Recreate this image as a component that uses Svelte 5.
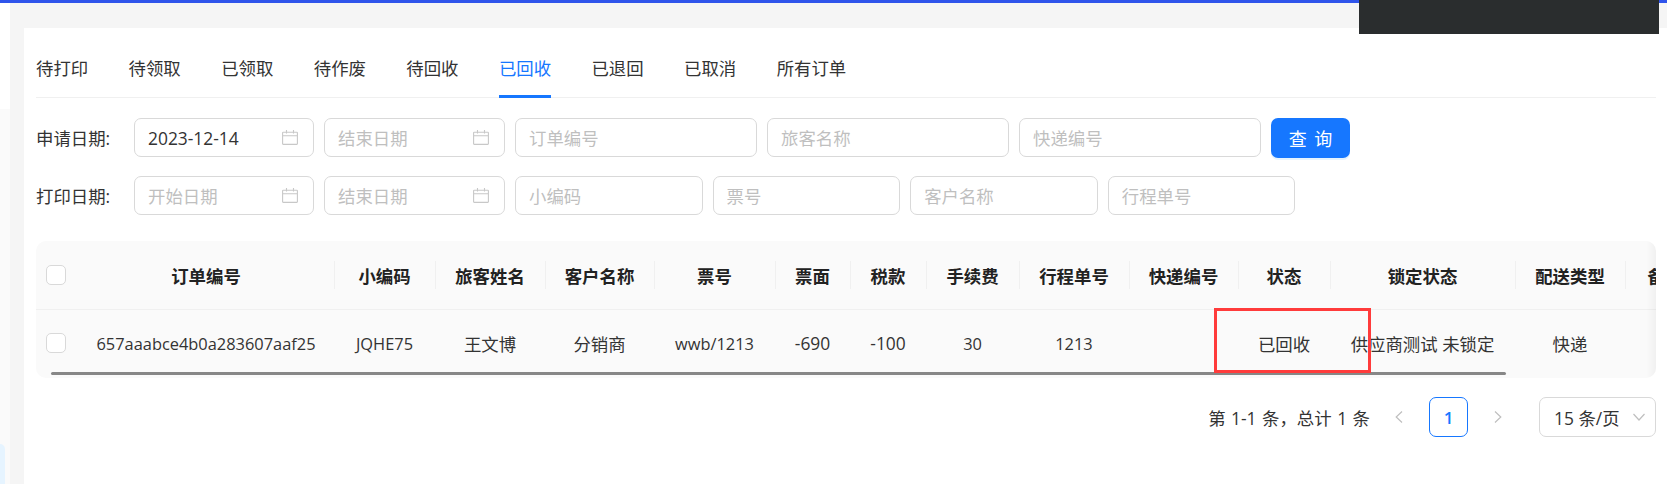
<script>
	const tabs = ['待打印', '待领取', '已领取', '待作废', '待回收', '已回收', '已退回', '已取消', '所有订单'];
	const active = '已回收';

	const columns = [
		{ title: '订单编号', width: 256, value: '657aaabce4b0a283607aaf25', latin: true },
		{ title: '小编码', width: 101, value: 'JQHE75', latin: true },
		{ title: '旅客姓名', width: 110, value: '王文博' },
		{ title: '客户名称', width: 109, value: '分销商' },
		{ title: '票号', width: 121, value: 'wwb/1213', latin: true },
		{ title: '票面', width: 75, value: '-690' },
		{ title: '税款', width: 76, value: '-100' },
		{ title: '手续费', width: 93, value: '30', latin: true },
		{ title: '行程单号', width: 110, value: '1213', latin: true },
		{ title: '快递编号', width: 109, value: '' },
		{ title: '状态', width: 92, value: '已回收' },
		{ title: '锁定状态', width: 185, value: '供应商测试 未锁定' },
		{ title: '配送类型', width: 110, value: '快递' },
		{ title: '备注', width: 80, value: '' }
	];
</script>

{#snippet calendar()}
	<svg class="cal" viewBox="0 0 16 15" fill="none" stroke="currentColor" stroke-width="1.1">
		<rect x="0.6" y="2.2" width="14.8" height="12.2" rx="0.6" />
		<path d="M0.6 5.8h14.8M4.5 0v3.6M11.5 0v3.6" />
	</svg>
{/snippet}

{#snippet dateBox(placeholder, value, cls)}
	<label class="date {cls}">
		<input {placeholder} {value} />
		{@render calendar()}
	</label>
{/snippet}

<div class="page">
	<div class="topbar"></div>
	<div class="dark"></div>

	<div class="shell">
		<aside class="sidebar">
			<div class="side-top"></div>
			<div class="side-rest"><div class="side-item"></div></div>
		</aside>

		<main class="main">
			<section class="card">
				<nav class="tabs">
					{#each tabs as tab}
						<div class="tab" class:active={tab === active}>{tab}</div>
					{/each}
				</nav>

				<div class="form-row first">
					<span class="label">申请日期:</span>
					{@render dateBox('开始日期', '2023-12-14', 'w1')}
					{@render dateBox('结束日期', '', 'w2')}
					<input class="field long" placeholder="订单编号" />
					<input class="field long" placeholder="旅客名称" />
					<input class="field long" placeholder="快递编号" />
					<button class="query">查 询</button>
				</div>
				<div class="form-row">
					<span class="label">打印日期:</span>
					{@render dateBox('开始日期', '', 'w1')}
					{@render dateBox('结束日期', '', 'w2')}
					<input class="field short" placeholder="小编码" />
					<input class="field short" placeholder="票号" />
					<input class="field short" placeholder="客户名称" />
					<input class="field short" placeholder="行程单号" />
				</div>

				<div class="table-wrap">
					<table>
						<colgroup>
							<col style="width: 42px" />
							{#each columns as col}
								<col style="width: {col.width}px" />
							{/each}
						</colgroup>
						<thead>
							<tr>
								<th><span class="check"></span></th>
								{#each columns as col}
									<th class="sep">{col.title}</th>
								{/each}
							</tr>
						</thead>
						<tbody>
							<tr>
								<td><span class="check"></span></td>
								{#each columns as col}
									<td class:latin={col.latin}>{col.value}</td>
								{/each}
							</tr>
						</tbody>
					</table>
					<div class="scroll-thumb"></div>
					<div class="edge-shadow"></div>
					<div class="marker"></div>
				</div>

				<div class="pager">
					<span class="total">第 1-1 条，总计 1 条</span>
					<svg class="chev prev" viewBox="0 0 10 14" fill="none" stroke="currentColor" stroke-width="1.2">
						<path d="M8 1.5 2.2 7 8 12.5" />
					</svg>
					<span class="page-no">1</span>
					<svg class="chev next" viewBox="0 0 10 14" fill="none" stroke="currentColor" stroke-width="1.2">
						<path d="M2 1.5 7.8 7 2 12.5" />
					</svg>
					<div class="size">
						<span>15 条/页</span>
						<svg class="down" viewBox="0 0 14 10" fill="none" stroke="currentColor" stroke-width="1.2">
							<path d="M1.5 2 7 8l5.5-6" />
						</svg>
					</div>
				</div>
			</section>
		</main>
	</div>
</div>

<style>
	:global(body) {
		margin: 0;
		background: #fff;
		font-family: 'Open Sans', 'Noto Sans CJK SC', sans-serif;
		font-size: 17px;
		color: #333;
	}

	.page {
		position: relative;
		height: 484px;
		overflow: hidden;
		display: flex;
		flex-direction: column;
	}

	.topbar {
		height: 3px;
		background: #2f54eb;
	}

	.dark {
		position: absolute;
		top: 0;
		left: 1359px;
		width: 300px;
		height: 34px;
		background: #2a2d2e;
	}

	.shell {
		flex: 1;
		display: flex;
		min-height: 0;
	}

	.sidebar {
		width: 10px;
		display: flex;
		flex-direction: column;
	}

	.side-top {
		height: 115px;
		background: #fff;
	}

	.side-rest {
		flex: 1;
		background: #fafafa;
		padding-top: 335px;
	}

	.side-item {
		width: 5px;
		height: 40px;
		background: #e6f4ff;
		border-radius: 0 6px 0 0;
	}

	.main {
		flex: 1;
		min-width: 0;
		background: #f5f5f5;
		padding: 25px 0 0 14px;
	}

	.card {
		height: 100%;
		box-sizing: border-box;
		background: #fff;
		padding: 0 11px 0 12px;
	}

	.tabs {
		display: flex;
		gap: 40.4px;
		height: 70px;
		border-bottom: 1px solid #f0f0f0;
		box-sizing: border-box;
	}

	.tab {
		height: 70px;
		box-sizing: border-box;
		padding-top: 27px;
		line-height: 26px;
		font-size: 17.4px;
		color: #333;
		white-space: nowrap;
	}

	.tab.active {
		color: #1677ff;
		border-bottom: 3px solid #1677ff;
	}

	.form-row {
		display: flex;
		align-items: center;
		gap: 10px;
		height: 39px;
		margin-top: 19px;
	}

	.form-row.first {
		margin-top: 20px;
	}

	.label {
		width: 88px;
		font-size: 17.4px;
		color: #333;
		white-space: nowrap;
	}

	.date,
	.field {
		box-sizing: border-box;
		height: 39px;
		border: 1px solid #d9d9d9;
		border-radius: 7px;
		background: #fff;
	}

	.date {
		display: flex;
		align-items: center;
		padding: 0 15px 0 13px;
		color: #c8c8c8;
	}

	.date.w1 {
		width: 180px;
	}

	.date.w2 {
		width: 181px;
	}

	.date input {
		flex: 1;
		min-width: 0;
		border: 0;
		padding: 0;
		outline: 0;
	}

	input {
		font: inherit;
		font-size: 17.4px;
		color: #333;
		background: transparent;
	}

	input::placeholder {
		color: #bfbfbf;
		opacity: 1;
	}

	.field {
		padding: 0 13px;
		outline: 0;
	}

	.field.long {
		width: 242px;
	}

	.field.short {
		width: 187.6px;
	}

	.cal {
		width: 16px;
		height: 15px;
		flex: none;
	}

	.query {
		width: 79px;
		height: 40px;
		border: 0;
		border-radius: 7px;
		background: #1677ff;
		color: #fff;
		font: inherit;
		font-size: 18px;
		word-spacing: 3px;
		box-shadow: 0 2px 0 rgba(5, 145, 255, 0.1);
	}

	.table-wrap {
		position: relative;
		margin-top: 26px;
		height: 137px;
		overflow: hidden;
		background: #fafafa;
		border-radius: 10px;
	}

	table {
		table-layout: fixed;
		width: 1669px;
		border-collapse: collapse;
	}

	th {
		position: relative;
		height: 68px;
		padding: 1px 0 0;
		box-sizing: border-box;
		border-bottom: 1px solid #f0f0f0;
		font-size: 17.4px;
		font-weight: 700;
		color: #222;
		white-space: nowrap;
		text-align: center;
	}

	th.sep::before {
		content: '';
		position: absolute;
		top: 20px;
		left: 0;
		height: 28px;
		width: 1px;
		background: #f0f0f0;
	}

	th:nth-child(2)::before {
		display: none;
	}

	td {
		height: 69px;
		padding: 0 0 1px;
		box-sizing: border-box;
		font-size: 17.4px;
		color: #333;
		white-space: nowrap;
		text-align: center;
	}

	td.latin {
		font-size: 16.4px;
	}

	.check {
		display: block;
		box-sizing: border-box;
		width: 20px;
		height: 20px;
		margin-left: 10px;
		border: 1px solid #d9d9d9;
		border-radius: 5px;
		background: #fff;
	}

	.scroll-thumb {
		position: absolute;
		left: 15px;
		width: 1455px;
		bottom: 3px;
		height: 3px;
		border-radius: 2px;
		background: #878787;
	}

	.edge-shadow {
		position: absolute;
		top: 0;
		right: 0;
		bottom: 0;
		width: 10px;
		background: linear-gradient(to left, rgba(0, 0, 0, 0.04), rgba(0, 0, 0, 0));
	}

	.marker {
		position: absolute;
		left: 1178px;
		top: 67px;
		width: 157px;
		height: 65px;
		box-sizing: border-box;
		border: 3px solid #ff3b3b;
	}

	.pager {
		display: flex;
		align-items: center;
		justify-content: flex-end;
		height: 40px;
		margin-top: 19px;
	}

	.total {
		font-size: 17.4px;
		margin-right: 24px;
		word-spacing: 1px;
		white-space: nowrap;
	}

	.chev {
		width: 10px;
		height: 14px;
		color: #bfbfbf;
		flex: none;
	}

	.page-no {
		box-sizing: border-box;
		width: 39px;
		height: 40px;
		margin: 0 25px;
		display: flex;
		align-items: center;
		justify-content: center;
		border: 1px solid #1677ff;
		border-radius: 7px;
		color: #1677ff;
		font-weight: 600;
	}

	.size {
		box-sizing: border-box;
		width: 117px;
		height: 40px;
		margin-left: 36px;
		display: flex;
		align-items: center;
		justify-content: space-between;
		padding: 0 9px 0 14px;
		border: 1px solid #d9d9d9;
		border-radius: 7px;
		font-size: 17.4px;
		white-space: nowrap;
	}

	.down {
		width: 14px;
		height: 10px;
		color: #bfbfbf;
		flex: none;
	}
</style>
